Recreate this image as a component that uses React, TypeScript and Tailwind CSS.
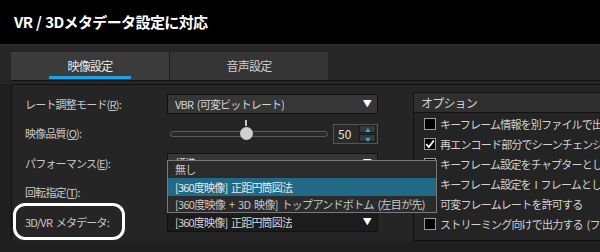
import React from 'react';

const FONT = '"Noto Sans CJK JP", "Liberation Sans", sans-serif';

function Dropdown({ text, dark = false }: { text: string; dark?: boolean }) {
  return (
    <div
      className={`flex h-[20px] w-[211px] shrink-0 items-center justify-between border border-[#121212] pl-[7px] pr-[6px] text-[#d6d6d6] ${
        dark ? 'bg-[#1c1c1c]' : 'bg-[#363636]'
      }`}
    >
      <span className="truncate">{text}</span>
      <span className="text-[9px] text-white">▼</span>
    </div>
  );
}

function Label({ children }: { children: React.ReactNode }) {
  return <div className="w-[155px] shrink-0 pl-[13px] text-[#c9c9c9]">{children}</div>;
}

function Checkbox({ checked = false }: { checked?: boolean }) {
  return (
    <span className="flex h-[12px] w-[12px] shrink-0 items-center justify-center border border-[#9a9a9a] bg-black">
      {checked && (
        <svg width="10" height="10" viewBox="0 0 10 10">
          <path d="M1.2 5.2 L3.8 8 L8.8 1.5" fill="none" stroke="white" strokeWidth="1.8" />
        </svg>
      )}
    </span>
  );
}

const options: { text: string; checked?: boolean; hidden?: boolean }[] = [
  { text: 'キーフレーム情報を別ファイルで出力する' },
  { text: '再エンコード部分でシーンチェンジを検出する', checked: true },
  { text: 'キーフレーム設定をチャプターとして出力する' },
  { text: 'キーフレーム設定を I フレームとして出力する' },
  { text: '可変フレームレートを許可する', hidden: true },
  { text: 'ストリーミング向けで出力する (ファストスタート)' },
];

export default function App() {
  return (
    <div
      className="relative h-[252px] w-[600px] overflow-hidden bg-[#1f1f1f] text-[11px] tracking-[-0.8px] [word-spacing:2px]"
      style={{ fontFamily: FONT }}
    >
      {/* title */}
      <div className="flex h-[44px] items-center bg-black pl-[14px] text-[15px] font-bold tracking-[-0.6px] text-white [word-spacing:1px]">
        VR / 3Dメタデータ設定に対応
      </div>

      {/* tabs */}
      <div className="h-[40px] border-t border-[#2e2e2e] bg-[#262626] pl-[11px] pt-[7px]">
        <div className="flex h-[29px] border-b border-[#111]">
          <div className="relative flex h-[28px] w-[158px] items-center justify-center bg-[#3b3b3b] text-[12px] text-[#e8e8e8]">
            映像設定
            <span className="absolute bottom-[1px] left-[38px] h-[3px] w-[82px] bg-[#1aa3e6]" />
          </div>
          <div className="h-[28px] w-px bg-[#1c1c1c]" />
          <div className="flex h-[28px] w-[158px] items-center justify-center bg-[#353535] text-[12px] text-[#cfcfcf]">
            音声設定
          </div>
        </div>
      </div>

      {/* panel */}
      <div className="ml-[11px] flex h-[157px] border-l border-t border-[#111] bg-[#252525]">
        <div className="flex w-[390px] shrink-0 flex-col pt-[4px]">
          <div className="flex h-[30px] items-center">
            <Label>
              レート調整モード(<u>R</u>):
            </Label>
            <Dropdown text="VBR (可変ビットレート)" />
          </div>
          <div className="flex h-[29px] items-center">
            <Label>
              映像品質(<u>Q</u>):
            </Label>
            <div className="flex items-center">
              <div className="relative ml-[3px] h-[6px] w-[158px] rounded-full border border-[#5a5a5a] bg-[#2a2a2a]">
                <span className="absolute left-[74px] top-[-12px] h-[6px] w-[2px] bg-[#c8c8c8]" />
                <span className="absolute left-[69px] top-[-5px] h-[13px] w-[13px] rounded-full bg-[#cfcfcf]" />
              </div>
              <div className="ml-[5px] flex h-[20px] w-[45px] items-center justify-between border border-[#555] bg-[#2a2a2a] pl-[4px] pr-[1px]">
                <span className="text-[12px] tracking-normal text-[#e0e0e0]">50</span>
                <div className="flex flex-col gap-[1px]">
                  <span className="flex h-[8px] w-[17px] items-center justify-center border border-[#1a1a1a] bg-[#3a3a3a] text-[5px] leading-none text-[#22b5f0]">
                    ▲
                  </span>
                  <span className="flex h-[8px] w-[17px] items-center justify-center border border-[#1a1a1a] bg-[#3a3a3a] text-[5px] leading-none text-[#22b5f0]">
                    ▼
                  </span>
                </div>
              </div>
            </div>
          </div>
          <div className="flex h-[30px] items-center">
            <Label>
              パフォーマンス(<u>E</u>):
            </Label>
            <Dropdown text="標準" />
          </div>
          <div className="flex h-[29px] items-center">
            <Label>
              回転指定(<u>T</u>):
            </Label>
            <Dropdown text="" />
          </div>
          <div className="flex h-[30px] items-center">
            <Label>3D/VR メタデータ:</Label>
            <Dropdown text="[360度映像] 正距円筒図法" dark />
          </div>
        </div>

        {/* options group */}
        <div className="ml-[11px] mt-[7px] h-[149px] min-w-0 flex-1 overflow-hidden border border-r-0 border-[#111] bg-[#242424]">
          <div className="flex h-[20px] items-center border-b border-[#111] bg-[#2f2f2f] pl-[7px] text-[12px] text-[#d0d0d0]">
            オプション
          </div>
          <div className="flex flex-col pt-[1px]">
            {options.map((o) => (
              <div key={o.text} className="flex h-[20px] items-center whitespace-nowrap pl-[10px] text-[#d3d3d3]">
                {o.hidden ? <span className="h-[12px] w-[12px] shrink-0" /> : <Checkbox checked={o.checked} />}
                <span className="ml-[4px]">{o.text}</span>
              </div>
            ))}
          </div>
        </div>
      </div>

      {/* dropdown popup list */}
      <div className="absolute left-[167px] top-[160px] flex w-[270px] flex-col border border-[#7a7a7a] bg-[#2b2b2b] text-[#c8c8c8]">
        <div className="flex h-[17px] items-center pl-[7px]">無し</div>
        <div className="flex h-[18px] items-center bg-[#226985] pl-[7px] text-[#eaeaea]">[360度映像] 正距円筒図法</div>
        <div className="flex h-[16px] items-center whitespace-nowrap pl-[7px] tracking-[-0.7px] [word-spacing:2px]">
          [360度映像 + 3D 映像] トップアンドボトム (左目が先)
        </div>
      </div>

      {/* highlight circle */}
      <div className="absolute left-[13px] top-[203px] h-[37px] w-[112px] rounded-[12px] border-[3px] border-white" />
    </div>
  );
}
